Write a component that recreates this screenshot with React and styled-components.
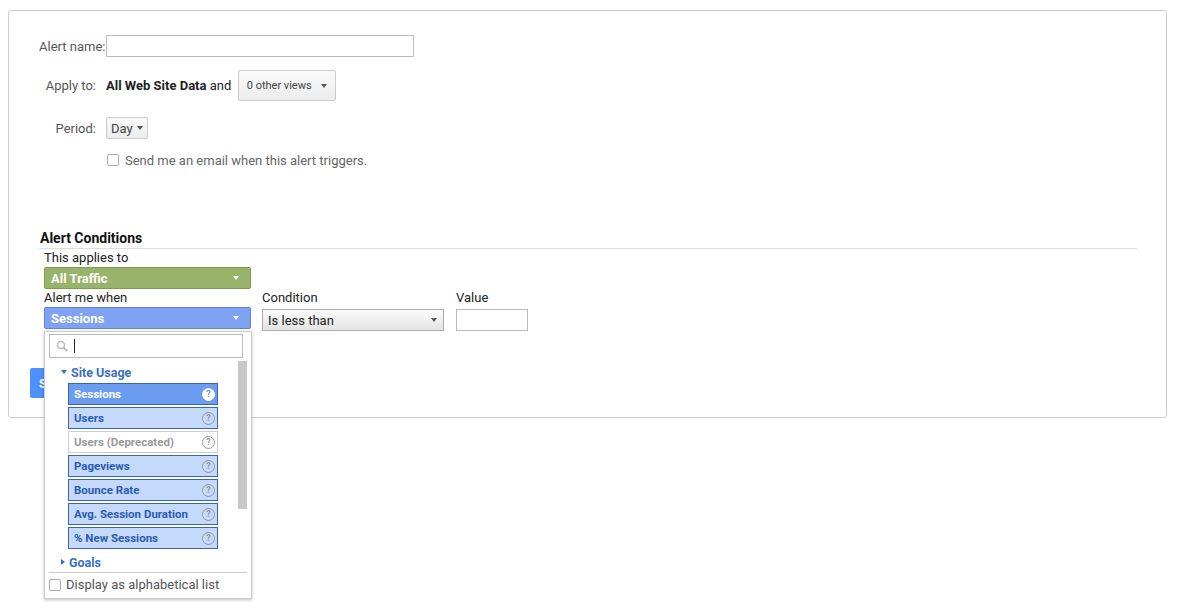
import React from "react";
import styled, { createGlobalStyle } from "styled-components";

const G = createGlobalStyle`
  body{margin:0;background:#fff;font-family:Roboto,"Liberation Sans",sans-serif;font-size:13px;color:#222;}
`;
const Page = styled.div`padding:10px 12px 0 8px;width:1179px;box-sizing:border-box;`;
const Panel = styled.div`
  position:relative;border:1px solid #ccc;border-radius:3px;height:408px;box-sizing:border-box;
  padding:24px 29px 0 30px;
`;
const Row = styled.div`display:flex;align-items:center;height:${p=>p.h}px;margin-bottom:${p=>p.mb||0}px;`;
const Label = styled.div`width:57px;white-space:nowrap;text-align:right;color:#555;margin-right:10px;`;
const TextInput = styled.div`width:${p=>p.w}px;height:${p=>p.h||22}px;border:1px solid #bbb;box-sizing:border-box;background:#fff;`;
const Btn = styled.div`
  display:flex;align-items:center;gap:${p=>p.gap||4}px;height:${p=>p.h}px;padding:0 ${p=>p.px}px;box-sizing:border-box;
  border:1px solid #ccc;border-radius:2px;background:linear-gradient(#fafafa,#ececec);font-size:${p=>p.fs}px;color:#444;
`;
const Caret = styled.span`width:0;height:0;border-left:3.5px solid transparent;border-right:3.5px solid transparent;border-top:4px solid ${p=>p.c||"#555"};`;
const Check = styled.span`width:10px;height:10px;border:1px solid #aaa;border-radius:2px;background:#fff;display:inline-block;`;
const Section = styled.div`margin-top:59px;`;
const H = styled.div`font-weight:bold;font-size:14px;color:#111;padding-left:1px;height:18px;border-bottom:1px solid #ddd;`;
const Body = styled.div`padding-left:5px;`;
const Small = styled.div`height:18px;line-height:18px;color:#222;`;
const Bar = styled.div`
  width:207px;height:22px;box-sizing:border-box;border-radius:2px;background:${p=>p.bg};border:1px solid ${p=>p.bd};
  display:flex;align-items:center;justify-content:space-between;padding:0 11px 0 6px;color:#fff;font-weight:bold;
`;
const Cols = styled.div`display:flex;`;
const Col = styled.div`width:${p=>p.w}px;`;
const Select = styled.div`
  width:182px;height:22px;margin-top:2px;box-sizing:border-box;border:1px solid #aaa;background:linear-gradient(#fbfbfb,#e4e4e4);
  display:flex;align-items:center;justify-content:space-between;padding:0 6px 0 5px;color:#222;
`;
const Save = styled.div`position:absolute;left:21px;top:357px;width:30px;height:30px;background:#4d90fe;border-radius:2px;color:#fff;font-weight:bold;padding:8px 0 0 9px;box-sizing:border-box;`;
const Drop = styled.div`
  position:absolute;left:44px;top:331px;width:208px;height:268px;box-sizing:border-box;background:#fff;
  border:1px solid #ccc;box-shadow:0 1px 3px rgba(0,0,0,.25);overflow:hidden;
`;
const Search = styled.div`margin:2px 0 0 4px;width:194px;height:24px;border:1px solid #bbb;box-sizing:border-box;display:flex;align-items:center;padding-left:6px;gap:6px;`;
const Cursor = styled.span`width:1px;height:14px;background:#222;`;
const List = styled.div`position:relative;height:214px;overflow:hidden;`;
const Scroll = styled.div`position:absolute;left:193px;top:3px;width:9px;height:148px;background:#c8c8c8;`;
const Group = styled.div`display:flex;align-items:center;gap:4px;padding-left:16px;height:22px;margin-top:${p=>p.mt}px;color:#3a6fc4;font-weight:bold;font-size:12.5px;`;
const Item = styled.div`
  margin:0 0 2px 23px;width:150px;height:22px;box-sizing:border-box;border:1px solid ${p=>p.off?"#ccc":"#3b65b0"};
  background:${p=>p.sel?"#6c9cf0":p.off?"#fff":"#c5d9fb"};color:${p=>p.sel?"#fff":p.off?"#999":"#2a5db0"};
  display:flex;align-items:center;justify-content:space-between;padding:0 2px 0 5px;font-weight:bold;font-size:11.5px;
`;
const Q = styled.span`width:13px;height:13px;border-radius:50%;border:1px solid ${p=>p.sel?"#fff":"#999"};background:${p=>p.sel?"#fff":"transparent"};color:${p=>p.sel?"#6c9cf0":"#999"};font-size:9px;display:flex;align-items:center;justify-content:center;box-sizing:border-box;`;
const Right = styled.span`border-top:3.5px solid transparent;border-bottom:3.5px solid transparent;border-left:4px solid #3a6fc4;`;
const Foot = styled.div`border-top:1px solid #ccc;margin:0 4px;padding-top:4px;display:flex;align-items:center;gap:5px;color:#555;`;

const items=[["Sessions","sel"],["Users"],["Users (Deprecated)","off"],["Pageviews"],["Bounce Rate"],["Avg. Session Duration"],["% New Sessions"]];

export default function App(){
  return(<Page><G/>
    <Panel>
      <Row h={22} mb={13}><Label>Alert name:</Label><TextInput w={308}/></Row>
      <Row h={31} mb={16}><Label>Apply to:</Label><b>All Web Site Data</b>&nbsp;and&nbsp;&nbsp;<Btn h={31} px={8} fs={11} gap={9}>0 other views <Caret/></Btn></Row>
      <Row h={22} mb={10}><Label>Period:</Label><Btn h={22} px={4} fs={13}>Day <Caret/></Btn></Row>
      <Row h={22}><span style={{width:68}}/><Check/><span style={{marginLeft:6,color:"#666"}}>Send me an email when this alert triggers.</span></Row>
      <Section>
        <H>Alert Conditions</H>
        <Body>
          <Small>This applies to</Small>
          <Bar bg="#98b46a" bd="#7c9a50">All Traffic <Caret c="#fff"/></Bar>
          <Cols>
            <Col w={218}><Small>Alert me when</Small><Bar bg="#7fa3f2" bd="#5f84d4">Sessions <Caret c="#fff"/></Bar></Col>
            <Col w={194}><Small>Condition</Small><Select>Is less than <Caret/></Select></Col>
            <Col w={80}><Small>Value</Small><TextInput w={72} style={{marginTop:2}}/></Col>
          </Cols>
        </Body>
      </Section>
      <Save>S</Save>
    </Panel>
    <Drop>
      <Search><svg width="12" height="12" viewBox="0 0 12 12"><circle cx="5" cy="5" r="3.5" stroke="#bbb" strokeWidth="1.5" fill="none"/><path d="M7.5 7.5L11 11" stroke="#bbb" strokeWidth="2"/></svg><Cursor/></Search>
      <List>
        <Scroll/>
        <Group mt={3}><Caret c="#3a6fc4"/>Site Usage</Group>
        {items.map(([t,k])=><Item key={t} sel={k==="sel"} off={k==="off"}>{t}<Q sel={k==="sel"}>?</Q></Item>)}
        <Group mt={0}><Right/>Goals</Group>
      </List>
      <Foot><Check/>Display as alphabetical list</Foot>
    </Drop>
  </Page>);
}
